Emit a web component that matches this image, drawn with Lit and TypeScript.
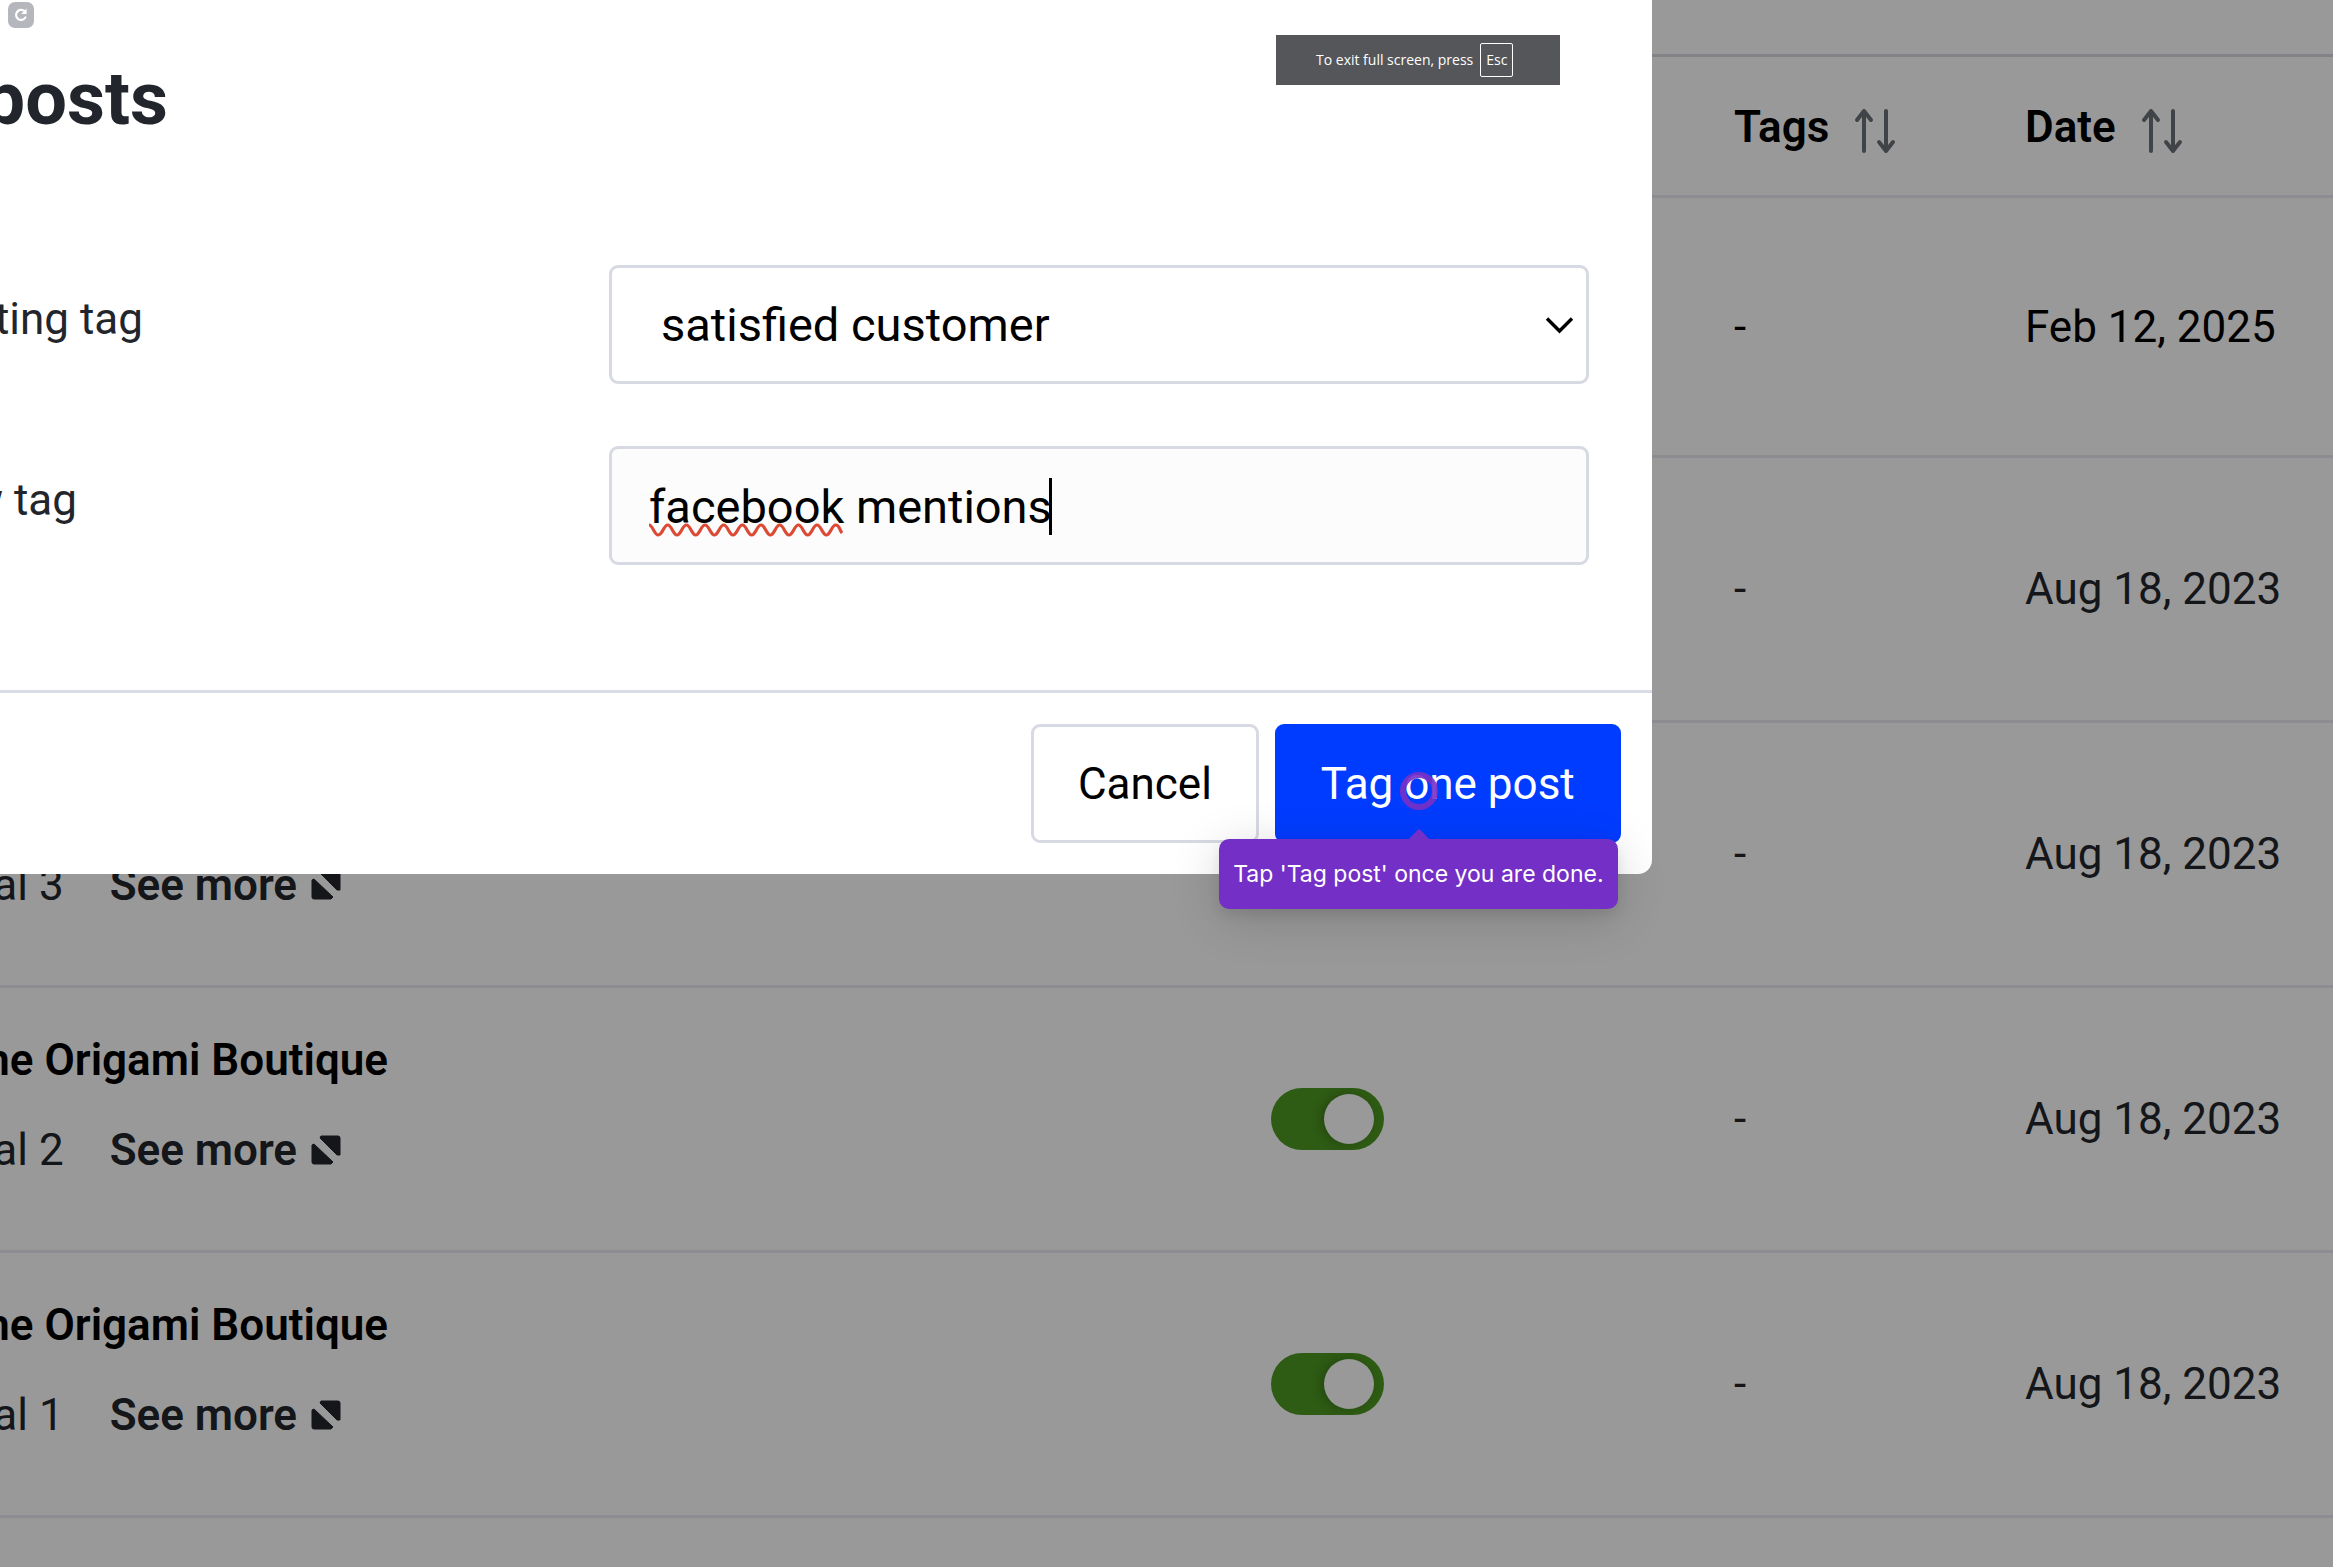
import { LitElement, html, svg, css, nothing } from "lit";
import { customElement, property, state } from "lit/decorators.js";

interface Post {
  page?: string;
  meta?: string;
  visible?: boolean;
  tags: string;
  date: string;
  active?: boolean;
}

const POSTS: Post[] = [
  { tags: "-", date: "Feb 12, 2025", active: true },
  { tags: "-", date: "Aug 18, 2023" },
  { meta: "al 3", tags: "-", date: "Aug 18, 2023" },
  { page: "he Origami Boutique", meta: "al 2", visible: true, tags: "-", date: "Aug 18, 2023" },
  { page: "he Origami Boutique", meta: "al 1", visible: true, tags: "-", date: "Aug 18, 2023" },
];

const sortIcon = svg`<svg class="sort-icon" viewBox="0 0 42 46" aria-hidden="true">
  <path d="M10 43V3M3 12l7-9 7 9M32 3v40M25 34l7 9 7-9" fill="none" stroke="#6c7279" stroke-width="4" stroke-linecap="round" stroke-linejoin="round"/>
</svg>`;

const expandIcon = svg`<svg class="expand-icon" viewBox="0 0 30 30" aria-hidden="true">
  <path d="M10 1H27Q29 1 29 3V20L26 20L9 3ZM3 9L22 27L20 29H3Q1 29 1 27V10Z" fill="currentColor" stroke="currentColor" stroke-width="1" stroke-linejoin="round"/>
</svg>`;

/** Table of posts shown behind the dialog. */
@customElement("posts-table")
export class PostsTable extends LitElement {
  @property({ attribute: false }) posts: Post[] = [];

  static styles = css`
    :host {
      display: block;
      padding-top: 54px;
    }
    .table {
      width: 100%;
      table-layout: fixed;
      border-collapse: separate;
      border-spacing: 0;
      border-top: 3px solid #d8dae2;
      font-size: 44px;
      line-height: 52px;
      color: #22262c;
    }
    .col-visible {
      width: 463px;
    }
    .col-tags {
      width: 291px;
    }
    .col-date {
      width: 308px;
    }
    .table th,
    .table td {
      box-sizing: border-box;
      padding: 0;
      border-bottom: 3px solid #ebebf2;
      text-align: left;
      vertical-align: middle;
    }
    .table .head th {
      height: 141px;
      padding-top: 2px;
    }
    .row td {
      height: 265px;
    }
    .row.active td {
      height: 260px;
      color: #000;
    }
    .sort {
      display: flex;
      align-items: center;
      gap: 25px;
      padding: 0;
      border: 0;
      background: none;
      font: inherit;
      font-weight: 600;
      color: #000;
    }
    .sort-icon {
      width: 42px;
      height: 46px;
      margin-top: 8px;
    }
    .post {
      display: flex;
      flex-direction: column;
      justify-content: flex-end;
      height: 180px;
      padding-bottom: 28px;
      line-height: 90px;
      white-space: nowrap;
    }
    .page {
      display: flex;
      justify-content: flex-end;
      width: 388px;
      font-weight: 600;
      color: #000;
    }
    .meta {
      display: flex;
      align-items: center;
      justify-content: flex-end;
      gap: 14px;
      width: 341px;
    }
    .more {
      display: flex;
      align-items: center;
      gap: 14px;
      margin-left: 32px;
      font-weight: 600;
      color: #22262c;
      text-decoration: none;
    }
    .expand-icon {
      width: 30px;
      height: 30px;
    }
    .switch {
      appearance: none;
      display: block;
      box-sizing: border-box;
      width: 113px;
      height: 62px;
      margin: 0;
      padding: 6px 10px;
      border-radius: 31px;
      background: #9aa0a8;
      overflow: hidden;
    }
    .switch::before {
      content: "";
      display: block;
      width: 50px;
      height: 50px;
      border-radius: 50%;
      background: #fff;
      box-shadow: -3px 0 12px rgba(0, 0, 0, 0.25);
    }
    .switch:checked {
      background: #4e9a22;
    }
    .switch:checked::before {
      margin-left: auto;
    }
  `;

  private renderPost(post: Post) {
    if (!post.meta) return nothing;
    return html`<div class="post">
      ${post.page ? html`<div class="page">${post.page}</div>` : nothing}
      <div class="meta">
        <span>${post.meta}</span>
        <a class="more" href="#">See more ${expandIcon}</a>
      </div>
    </div>`;
  }

  render() {
    return html`<table class="table">
      <colgroup>
        <col />
        <col class="col-visible" />
        <col class="col-tags" />
        <col class="col-date" />
      </colgroup>
      <thead>
        <tr class="head">
          <th></th>
          <th></th>
          <th scope="col"><button class="sort" type="button">Tags ${sortIcon}</button></th>
          <th scope="col"><button class="sort" type="button">Date ${sortIcon}</button></th>
        </tr>
      </thead>
      <tbody>
        ${this.posts.map(
          (post) => html`<tr class="row ${post.active ? "active" : ""}">
            <td>${this.renderPost(post)}</td>
            <td>
              ${post.visible
                ? html`<input class="switch" type="checkbox" role="switch" aria-label="Show post" checked />`
                : nothing}
            </td>
            <td>${post.tags}</td>
            <td>${post.date}</td>
          </tr>`,
        )}
      </tbody>
    </table>`;
  }
}

/** Dialog for tagging the selected posts. */
@customElement("tag-dialog")
export class TagDialog extends LitElement {
  @state() private newTag = "facebook mentions";

  static styles = css`
    :host {
      display: block;
      background: #fff;
      border-radius: 0 0 14px 0;
      color: #22262c;
    }
    .title {
      display: flex;
      justify-content: flex-end;
      width: 168px;
      margin: 0;
      padding: 57px 0 124px;
      font-size: 74px;
      line-height: 84px;
      font-weight: 700;
    }
    .form {
      display: grid;
      grid-template-columns: 609px 1fr;
      row-gap: 62px;
      padding: 0 63px 125px 0;
    }
    .label {
      display: flex;
      justify-content: flex-end;
      align-self: center;
      width: 143px;
      padding-bottom: 12px;
      font-size: 44px;
      line-height: 52px;
      white-space: nowrap;
    }
    .label.short {
      width: 77px;
    }
    .field {
      position: relative;
      height: 119px;
    }
    .control {
      appearance: none;
      box-sizing: border-box;
      width: 100%;
      height: 100%;
      margin: 0;
      padding: 1px 37px 0;
      border: 3px solid #d7dae2;
      border-radius: 9px;
      background: #fff;
      font-family: inherit;
      font-size: 47px;
      line-height: 56px;
      color: #000;
      outline: none;
    }
    .select {
      padding-left: 49px;
    }
    .input {
      background: #fcfcfc;
    }
    .chevron {
      position: absolute;
      top: 51px;
      right: 15px;
      width: 29px;
      height: 18px;
      pointer-events: none;
    }
    .squiggle {
      position: absolute;
      top: 77px;
      left: 40px;
      width: 194px;
      height: 14px;
      pointer-events: none;
    }
    .caret {
      position: absolute;
      top: 32px;
      left: 440px;
      width: 3px;
      height: 57px;
      background: #000;
    }
    .footer {
      display: flex;
      justify-content: flex-end;
      gap: 16px;
      padding: 31px 31px 31px 0;
      border-top: 3px solid #d8dde5;
    }
    .button {
      box-sizing: border-box;
      height: 119px;
      padding: 0 44px;
      border: 3px solid #d7dae2;
      border-radius: 9px;
      background: #fff;
      font-family: inherit;
      font-size: 44px;
      line-height: 52px;
      color: #000;
    }
    .button.primary {
      padding: 0 43px;
      border-color: #003cff;
      background: #003cff;
      color: #fff;
    }
    .target {
      position: relative;
    }
    .ring {
      position: absolute;
      top: 48px;
      left: 125px;
      box-sizing: border-box;
      width: 38px;
      height: 38px;
      border: 6px solid rgba(122, 48, 196, 0.9);
      border-radius: 50%;
      pointer-events: none;
    }
    .tip {
      position: absolute;
      top: 115px;
      left: -56px;
      box-sizing: border-box;
      width: 399px;
      height: 70px;
      border-radius: 10px;
      background: #7430c6;
      box-shadow: 0 10px 50px rgba(0, 0, 0, 0.16), 0 6px 12px rgba(0, 0, 0, 0.08);
      font-family: Inter, sans-serif;
      font-size: 23px;
      line-height: 70px;
      text-align: center;
      white-space: nowrap;
      color: #fff;
    }
    .arrow {
      position: absolute;
      top: -10px;
      left: 189px;
      width: 22px;
      height: 11px;
    }
  `;

  render() {
    return html`
      <h1 class="title">posts</h1>
      <form class="form">
        <label class="label" for="existing">ting tag</label>
        <div class="field">
          <select class="control select" id="existing">
            <option>satisfied customer</option>
          </select>
          <svg class="chevron" viewBox="0 0 29 18" aria-hidden="true">
            <path d="M2 2.5L14.5 15L27 2.5" fill="none" stroke="#000" stroke-width="3.4" />
          </svg>
        </div>
        <label class="label short" for="new">w tag</label>
        <div class="field">
          <input
            class="control input"
            id="new"
            type="text"
            spellcheck="false"
            .value=${this.newTag}
            @input=${(e: Event) => (this.newTag = (e.target as HTMLInputElement).value)}
          />
          <svg class="squiggle" viewBox="0 0 194 14" aria-hidden="true">
            <path
              d="M0 2C4 2 5 12 9.3 12S14.700 2 18.700 2S24 12 28 12S33.400 2 37.400 2S42.700 12 46.700 12S52 2 56 2S61.400 12 65.400 12S70.700 2 74.700 2S80 12 84 12S89.400 2 93.400 2S98.700 12 102.700 12S108 2 112 2S117.400 12 121.400 12S126.700 2 130.700 2S136 12 140 12S145.400 2 149.400 2S154.700 12 158.700 12S164 2 168 2S173.400 12 177.400 12S182.700 2 186.700 2S190 6 193 10"
              fill="none"
              stroke="#dc4a35"
              stroke-width="3.2"
            />
          </svg>
          <span class="caret"></span>
        </div>
      </form>
      <div class="footer">
        <button class="button" type="button">Cancel</button>
        <div class="target">
          <button class="button primary" type="button">Tag one post</button>
          <span class="ring"></span>
          <div class="tip" role="tooltip">
            <svg class="arrow" viewBox="0 0 22 11" aria-hidden="true">
              <path d="M0 11L9 1.500Q11-.5 13 1.500L22 11Z" fill="#7430c6" />
            </svg>
            Tap 'Tag post' once you are done.
          </div>
        </div>
      </div>
    `;
  }
}

@customElement("app-root")
export class AppRoot extends LitElement {
  static styles = css`
    :host {
      display: block;
      position: relative;
      box-sizing: border-box;
      height: 100vh;
      overflow: hidden;
      background: #fff;
      font-family: Roboto, "Liberation Sans", sans-serif;
    }
    .scrim {
      position: absolute;
      inset: 0;
      padding-right: 29.2%;
      background: rgba(0, 0, 0, 0.4);
    }
    .notice {
      position: absolute;
      top: 35px;
      left: 1276px;
      display: flex;
      align-items: center;
      gap: 7px;
      box-sizing: border-box;
      width: 284px;
      height: 50px;
      padding-left: 40px;
      background: #54565a;
      font-family: "Open Sans", "Noto Sans", sans-serif;
      font-size: 14px;
      line-height: 32px;
      white-space: nowrap;
      color: #fff;
    }
    .key {
      box-sizing: border-box;
      width: 33px;
      height: 34px;
      border: 1px solid #fff;
      border-radius: 2px;
      font-family: inherit;
      text-align: center;
    }
    .reload {
      position: absolute;
      top: 2px;
      left: 8px;
      display: grid;
      place-items: center;
      width: 26px;
      height: 26px;
      padding: 0;
      border: 0;
      border-radius: 7px;
      background: #b6b7bc;
    }
    .reload-icon {
      width: 14px;
      height: 14px;
    }
  `;

  render() {
    return html`
      <posts-table .posts=${POSTS}></posts-table>
      <div class="scrim"><tag-dialog></tag-dialog></div>
      <div class="notice">
        <span>To exit full screen, press</span>
        <kbd class="key">Esc</kbd>
      </div>
      <button class="reload" type="button" aria-label="Reload">
        <svg class="reload-icon" viewBox="0 0 14 14" aria-hidden="true">
          <path d="M11.400 9.500A5 5 0 1 1 10.600 3.400" fill="none" stroke="#fff" stroke-width="2.2" stroke-linecap="round" />
          <path d="M12.600 0.500V6H7.200Z" fill="#fff" />
        </svg>
      </button>
    `;
  }
}
